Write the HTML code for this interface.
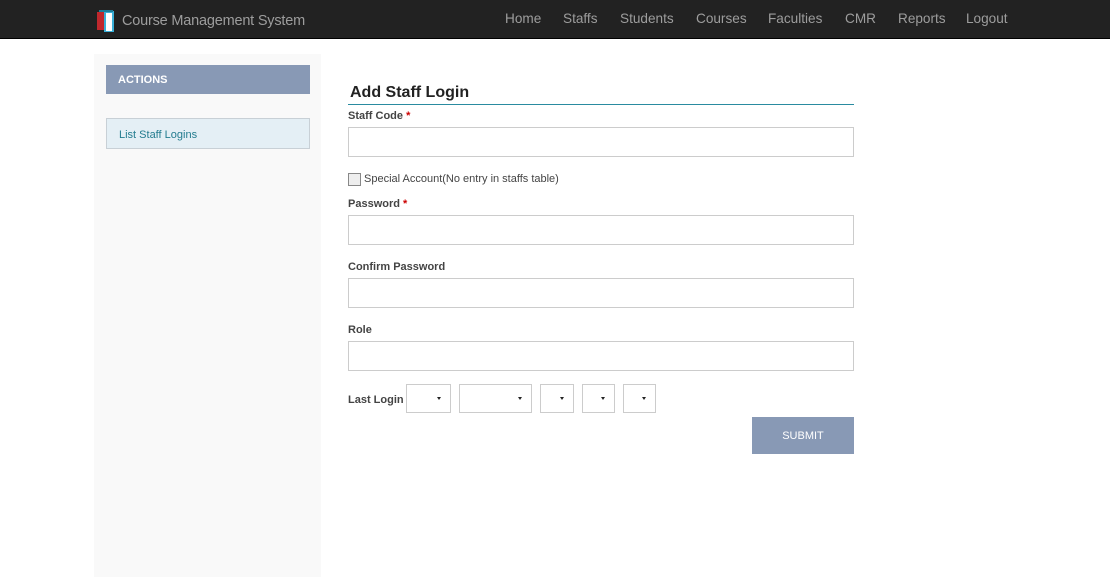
<!DOCTYPE html><html><head><style>
*{box-sizing:border-box;margin:0;padding:0}
body{width:1110px;height:577px;background:#fff;font-family:"Liberation Sans",Arial,sans-serif;position:relative;overflow:hidden}
.nav{position:absolute;left:0;top:0;width:1110px;height:39px;background:#222;border-bottom:1px solid #000}
.nav .brand{position:absolute;left:122px;top:13px;color:#9d9d9d;font-size:14.5px;letter-spacing:-0.2px}
.nav a{position:absolute;top:11px;color:#9d9d9d;font-size:13.6px;text-decoration:none}
.side{position:absolute;left:94px;top:54px;width:227px;height:523px;background:#f9f9f9}
.act{position:absolute;left:106px;top:65px;width:204px;height:29px;background:#8899b5;color:#fff;font-size:11px;font-weight:bold;padding:9px 12px}
.lst{position:absolute;left:106px;top:118px;width:204px;height:31px;background:#e4eff5;border:1px solid #c8d0d6;color:#237c8f;font-size:11px;padding:10px 12px}
.abs{position:absolute}
.lbl{position:absolute;left:348px;font-size:11px;font-weight:bold;color:#444}
.lbl span{color:#c00}
.inp{position:absolute;left:348px;width:506px;height:30px;border:1px solid #ccc;background:#fff}
.sel{position:absolute;top:384px;height:29px;border:1px solid #ccc;background:#fff}
.sel:after{content:"";position:absolute;right:9px;top:12px;border:2px solid transparent;border-top:3px solid #222}
</style></head><body>
<div class="nav">
<svg class="abs" style="left:96px;top:9px" width="20" height="23"><rect x="1" y="3" width="8" height="18" fill="#c0282d"/><rect x="8" y="2" width="10" height="21" fill="#3ab0d8"/><rect x="10" y="4" width="6" height="18" fill="#fff"/><rect x="3" y="1" width="14" height="2" fill="#1a7d9a"/></svg>
<div class="brand">Course Management System</div>
<a style="left:505px">Home</a><a style="left:563px">Staffs</a><a style="left:620px">Students</a><a style="left:696px">Courses</a><a style="left:768px">Faculties</a><a style="left:845px">CMR</a><a style="left:898px">Reports</a><a style="left:966px">Logout</a>
</div>
<div class="side"></div>
<div class="act">ACTIONS</div>
<div class="lst">List Staff Logins</div>
<div class="abs" style="left:350px;top:84px;font-size:16px;font-weight:bold;color:#222">Add Staff Login</div>
<div class="abs" style="left:348px;top:104px;width:506px;height:1px;background:#2a8ba0"></div>
<div class="lbl" style="top:110px">Staff Code <span>*</span></div>
<div class="inp" style="top:127px"></div>
<div class="abs" style="left:348px;top:173px;width:13px;height:13px;border:1px solid #888;background:#eee"></div>
<div class="abs" style="left:364px;top:173px;font-size:11px;color:#444">Special Account(No entry in staffs table)</div>
<div class="lbl" style="top:198px">Password <span>*</span></div>
<div class="inp" style="top:215px"></div>
<div class="lbl" style="top:261px">Confirm Password</div>
<div class="inp" style="top:278px"></div>
<div class="lbl" style="top:324px">Role</div>
<div class="inp" style="top:341px"></div>
<div class="lbl" style="top:394px">Last Login</div>
<div class="sel" style="left:406px;width:45px"></div>
<div class="sel" style="left:459px;width:73px"></div>
<div class="sel" style="left:540px;width:34px"></div>
<div class="sel" style="left:582px;width:33px"></div>
<div class="sel" style="left:623px;width:33px"></div>
<div class="abs" style="left:752px;top:417px;width:102px;height:37px;background:#8899b5;color:#fff;font-size:11px;text-align:center;line-height:38px">SUBMIT</div>
</body></html>
